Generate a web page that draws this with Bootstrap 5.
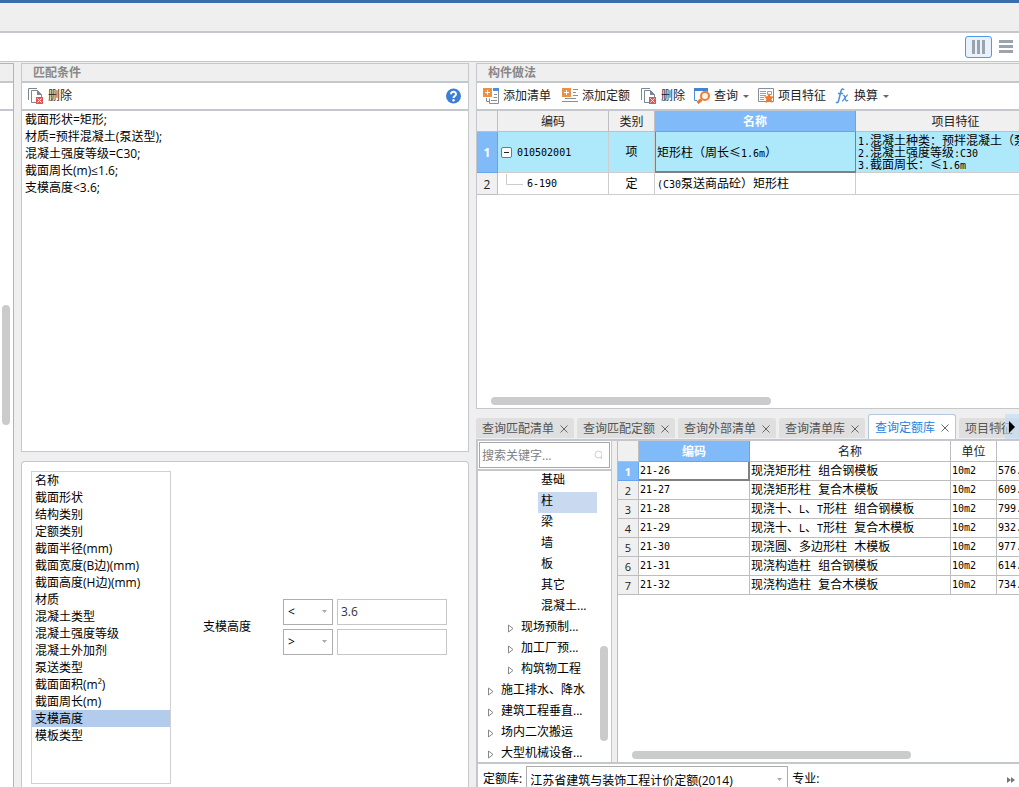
<!DOCTYPE html>
<html lang="zh-CN">
<head>
<meta charset="utf-8">
<meta name="viewport" content="width=device-width, initial-scale=1">
<title>构件做法</title>
<link href="https://cdn.jsdelivr.net/npm/bootstrap@5.3.0/dist/css/bootstrap.min.css" rel="stylesheet">
<script src="https://cdn.jsdelivr.net/npm/bootstrap@5.3.0/dist/js/bootstrap.bundle.min.js"></script>
<style>
:root { --line: #c4c8cc; --chrome: #efefef; --ui: "Open Sans", "Noto Sans CJK SC", sans-serif; --cell: "DejaVu Sans Mono", "Noto Sans CJK SC", monospace; }
body { font-family: var(--ui); font-size: 12px; line-height: 17px; color: #000; background: var(--chrome); }
button, input, select, textarea { font-family: inherit; font-size: 12px; }
.title-strip { height: 33px; background: var(--chrome); border-top: 3px solid #3a6eaa; border-bottom: 2px solid var(--line); }
.view-bar { height: 29px; background: #fff; border-bottom: 1px solid var(--line); }
.view-btn { width: 27px; height: 22px; padding: 0; border: 1px solid transparent; border-radius: 3px; background: none; line-height: 0; }
.view-btn.active { border-color: #4a9be8; background: #e9f2fc; }
.workspace { min-height: 0; padding-top: 1px; display: grid; grid-template-columns: 14px minmax(0, 448fr) minmax(0, 543fr); gap: 7px; }
.split-a, .split-b { display: grid; min-width: 0; min-height: 0; }
.split-a { grid-template-rows: minmax(0, 389fr) minmax(0, 326fr); gap: 9px; }
.split-b { grid-template-rows: minmax(0, 346fr) minmax(0, 373fr); gap: 5px; }
.pane { background: #fff; border: 1px solid var(--line); overflow: hidden; min-height: 0; position: relative; }
.pane-head { height: 19px; padding-left: 11px; background: var(--chrome); border-bottom: 2px solid var(--line); color: #888; font-weight: 600; line-height: 18px; font-size: 12px; margin: 0; flex: none; }
.tools { height: 28px; padding: 0 2px; gap: 3px; border-bottom: 2px solid var(--line); flex: none; }
.tool { display: flex; align-items: center; gap: 4px; height: 22px; padding: 0 4px; border: 0; border-radius: 3px; background: #fff; color: #222; white-space: nowrap; line-height: 22px; }
.tool.has-menu { padding: 0 2px; }
.tool.has-menu::after { content: ""; margin-left: 1px; border: 3px solid transparent; border-top-color: #666; border-bottom: 0; }
.strip { border-width: 1px 1px 0 0; border-color: #b4b4b4; }
.thumb { position: absolute; background: #cbcbcb; border-radius: 4px; }
.thumb-h { height: 8px; }
.thumb-v { width: 8px; }
.rules { resize: none; border: 0; outline: 0; padding: 0 3px; line-height: 17px; color: #000; }
.attrs { width: 140px; margin: 9px 0 3px 9px; border: 1px solid #d0d0d0; border-radius: 0; flex: none; }
.attrs .list-group-item { border: 0; border-radius: 0; padding: 0 3px; line-height: 17px; color: #000; background: none; }
.attrs .list-group-item.active { background: #b3ccec; margin: 0; }
.field, .pick { height: 26px; border: 1px solid #c4c6c9; border-radius: 0; padding: 0 3px; color: #333; background: #fff; }
.pick { appearance: none; border-color: #adadad; color: #000; background: #fff url("data:image/svg+xml,%3Csvg xmlns='http://www.w3.org/2000/svg' width='5' height='3'%3E%3Cpath d='M0 0h5L2.5 3z' fill='%23aaa'/%3E%3C/svg%3E") no-repeat right 5px center; }
.cond { padding: 4px 0 0 11px; }
.cond label { width: 80px; }
.cond .pick { width: 50px; padding-left: 4px; }
.cond .field { width: 110px; }
.sheet { table-layout: fixed; border-collapse: separate; border-spacing: 0; }
.sheet th, .sheet td { border: 0 solid #cdcdcd; border-width: 0 1px 1px 0; padding: 0; overflow: hidden; white-space: nowrap; font-weight: 400; }
.sheet thead th, .sheet tbody th { background: #f0f0f0; text-align: center; color: #222; border-color: #bfbfbf; }
.sheet thead th { height: 21px; line-height: 18px; padding-top: 2px; }
.sheet thead .on, .sheet tbody .on { background: #80baf9; color: #fff; font-weight: 700; border-color: #64a5ee; }
.sheet td { font-family: var(--cell); padding-left: 2px; line-height: 12px; }
.sheet td.kind { padding: 0; text-align: center; }
.sheet .code { font-size: 10px; }
.sheet span.code { line-height: 0; }
.sheet .wide { font-family: "Noto Sans CJK SC", sans-serif; line-height: 0; display: inline-block; width: 12px; text-align: center; }
.sheet .picked { background: #aee9fb; }
.sheet .cursor { box-shadow: inset 0 -1px #808080, inset -1px 0 #808080; border-color: #808080; }
.lg1 .r1 { height: 41px; }
.lg1 .r2 { height: 22px; }
.lg1 td { padding-top: 1px; }
.lg1 tbody th { padding-top: 1px; }
.lg1 .cursor { box-shadow: inset 0 -1px #808080, inset 1px 0 #808080; }
.lg2 tbody tr { height: 19px; }
.lg2 td, .lg2 thead th, .lg2 tbody th { border-color: #bdbdbd; }
.lg2 thead .plain { background: #fff; }
.lg2 tbody th { line-height: 16px; font-size: 11px; padding-top: 2px; }
.lg2 td { padding-left: 1px; }
.tree-code { display: flex; align-items: center; height: 100%; }
.toggle-box { width: 11px; height: 11px; border: 1px solid #777; border-radius: 2px; background: #fff; line-height: 0; padding: 0; margin: 0 5px 0 1px; }
.tabs { height: 25px; gap: 3px; overflow: hidden; flex: none; position: relative; align-items: flex-end; }
.tab-btn { display: flex; align-items: center; gap: 6px; height: 20px; margin-bottom: 1px; padding: 1px 6px 0; border: 0; border-radius: 3px 3px 0 0; background: #dfdfdf; color: #555; white-space: nowrap; flex: none; line-height: 20px; }
.tab-btn.active { height: 25px; margin: 0; border: 1px solid #b5c7dc; border-bottom: 0; background: #fff; color: #2b80df; }
.tab-nav { position: absolute; right: 0; top: 0; height: 25px; }
.tab-nav button { border: 0; padding: 0; width: 14px; height: 25px; background: none; line-height: 0; }
.tab-nav .next { background: rgba(190, 220, 245, .6); }
.query { border-width: 2px 0 0 2px; }
.query-grid { display: grid; grid-template-columns: 134px minmax(0, 1fr); gap: 5px; background: var(--chrome); border-bottom: 2px solid var(--line); }
.query-side, .query-main { background: #fff; position: relative; overflow: hidden; min-height: 0; }
.query-side { border-right: 1px solid var(--line); }
.query-main { border-left: 1px solid #bdbdbd; }
.search { margin: 1px; height: 26px; border: 1px solid #a5a8ac; padding: 0 7px 0 2px; flex: none; }
.search input { border: 0; outline: 0; padding: 0; min-width: 0; color: #333; }
.search input::placeholder { color: #808080; opacity: 1; }
.catalog { border-top: 2px solid var(--line); margin: 0; padding: 0; list-style: none; }
.catalog li { height: 21px; display: flex; align-items: center; gap: 7px; }
.catalog a { color: #000; text-decoration: none; white-space: nowrap; height: 21px; line-height: 18px; }
.catalog .lv1 { padding-left: 10px; }
.catalog .lv2 { padding-left: 30px; }
.catalog .lv3 { padding-left: 60px; }
.catalog .lv3 a { padding: 0 3px; }
.catalog .lv3 .active { background: #c9d9ef; width: 59px; }
.catalog-clip { min-height: 0; overflow: hidden; }
.source { height: 23px; gap: 4px; padding: 2px 4px 0 5px; overflow: hidden; align-items: flex-start; line-height: 26px; flex: none; }
.source .pick { width: 262px; padding-top: 1px; }
</style>
</head>
<body class="d-flex flex-column vh-100 overflow-hidden">
<header class="flex-shrink-0">
  <div class="title-strip"></div>
  <div class="view-bar d-flex align-items-center justify-content-end">
    <button class="view-btn active" type="button" aria-label="分栏显示"><svg width="15" height="14"><path d="M1 0h3v14H1zM6 0h3v14H6zM11 0h3v14h-3z" fill="#9aa3ae"/></svg></button>
    <button class="view-btn" type="button" aria-label="列表显示"><svg width="14" height="14"><path d="M0 0h14v3H0zM0 5h14v3H0zM0 10h14v3H0z" fill="#9aa3ae"/></svg></button>
  </div>
</header>

<main class="workspace flex-grow-1">
  <div class="pane strip d-flex flex-column">
    <div class="pane-head"></div>
    <div class="tools"></div>
    <span class="thumb thumb-v" style="left:2px;top:33.4%;height:16.5%"></span>
  </div>

  <div class="split-a">
    <section class="pane d-flex flex-column">
      <h2 class="pane-head">匹配条件</h2>
      <div class="tools d-flex align-items-center justify-content-between">
        <button class="tool" type="button"><svg width="16" height="16" fill="none"><path d="M.5 12V.5H9M3.500 2.500h6l4 4V14.500h-10z" stroke="#7b8894"/><path d="M9 2v5h5z" fill="#7b8894"/><path d="M8 9h7v7H8z" fill="#d9595b"/><path d="M9.500 10.500l4 4m0-4l-4 4" stroke="#fff"/></svg>删除</button>
        <button class="tool" type="button" aria-label="帮助"><svg width="16" height="16"><circle cx="7.500" cy="8" r="7.500" fill="#3e7fd6"/><path d="M5 6.300c0-3.500 5.200-3.300 5 0C9.900 8 7.500 8 7.500 10" stroke="#fff" stroke-width="2" fill="none"/><circle cx="7.500" cy="12.300" r="1.200" fill="#fff"/></svg></button>
      </div>
      <textarea class="rules flex-grow-1 w-100" aria-label="匹配条件">截面形状=矩形;
材质=预拌混凝土(泵送型);
混凝土强度等级=C30;
截面周长(m)≤1.6;
支模高度&lt;3.6;</textarea>
    </section>

    <section class="pane border-bottom-0 rounded-top-1 d-flex">
      <div class="attrs list-group">
        <button type="button" class="list-group-item list-group-item-action">名称</button>
        <button type="button" class="list-group-item list-group-item-action">截面形状</button>
        <button type="button" class="list-group-item list-group-item-action">结构类别</button>
        <button type="button" class="list-group-item list-group-item-action">定额类别</button>
        <button type="button" class="list-group-item list-group-item-action">截面半径(mm)</button>
        <button type="button" class="list-group-item list-group-item-action">截面宽度(B边)(mm)</button>
        <button type="button" class="list-group-item list-group-item-action">截面高度(H边)(mm)</button>
        <button type="button" class="list-group-item list-group-item-action">材质</button>
        <button type="button" class="list-group-item list-group-item-action">混凝土类型</button>
        <button type="button" class="list-group-item list-group-item-action">混凝土强度等级</button>
        <button type="button" class="list-group-item list-group-item-action">混凝土外加剂</button>
        <button type="button" class="list-group-item list-group-item-action">泵送类型</button>
        <button type="button" class="list-group-item list-group-item-action">截面面积(m²)</button>
        <button type="button" class="list-group-item list-group-item-action">截面周长(m)</button>
        <button type="button" class="list-group-item list-group-item-action active">支模高度</button>
        <button type="button" class="list-group-item list-group-item-action">模板类型</button>
      </div>
      <div class="cond flex-grow-1 d-flex align-items-center justify-content-center">
        <label for="upper">支模高度</label>
        <div class="d-grid gap-1">
          <div class="d-flex gap-1"><select class="pick" aria-label="上限比较"><option>&lt;</option><option>≤</option></select><input id="upper" class="field" type="text" value="3.6"></div>
          <div class="d-flex gap-1"><select class="pick" aria-label="下限比较"><option>&gt;</option><option>≥</option></select><input class="field" type="text" aria-label="下限"></div>
        </div>
      </div>
    </section>
  </div>

  <div class="split-b">
    <section class="pane border-end-0 d-flex flex-column">
      <h2 class="pane-head">构件做法</h2>
      <div class="tools d-flex align-items-center">
        <button class="tool" type="button"><svg width="16" height="16" fill="none"><path d="M10.500 1.500h5v14h-9v-5" stroke="#84919d"/><path d="M10 0h6v3h-6z" fill="#4d8fdc"/><path d="M3.500 10v3.500H6M8 12.500h6M10.500 9.500H14M11 6.500h3" stroke="#84919d"/><path d="M0 0h9v9H0z" fill="#ec9046"/><path d="M4.500 2v5M2 4.500h5" stroke="#fff"/></svg>添加清单</button>
        <button class="tool" type="button"><svg width="16" height="16" fill="none"><path d="M11 1.500h5M11 4.500h3M11 7.500h5M3 10.500h11M0 13.500h16" stroke="#84919d"/><path d="M0 0h9v9H0z" fill="#ec9046"/><path d="M4.500 2v5M2 4.500h5" stroke="#fff"/></svg>添加定额</button>
        <button class="tool" type="button"><svg width="16" height="16" fill="none"><path d="M.5 12V.5H9M3.500 2.500h6l4 4V14.500h-10z" stroke="#7b8894"/><path d="M9 2v5h5z" fill="#7b8894"/><path d="M8 9h7v7H8z" fill="#d9595b"/><path d="M9.500 10.500l4 4m0-4l-4 4" stroke="#fff"/></svg>删除</button>
        <button class="tool has-menu" type="button"><svg width="16" height="16" fill="none"><path d="M.5 3v9.500H3M13.500 3v1" stroke="#4d8fdc"/><path d="M0 0h14v3H0z" fill="#4384d6"/><path d="M7.500 11.500L3.500 15" stroke="#ed7428" stroke-width="3"/><circle cx="11" cy="8" r="4" fill="#fff4ea" stroke="#ed7d35" stroke-width="2"/></svg>查询</button>
        <button class="tool" type="button"><svg width="16" height="16" fill="none"><path d="M.5.5h15v13H.5z" stroke="#84919d"/><path d="M2 3.500h6M2 5.500h6M2 7.500h6M2 9.500h4M2 11.500h4M9.500 3.500h4v3h-4z" stroke="#95a0aa"/><path d="M11 5l1.500 3.200 3.500.3-2.500 2.500.9 4-3.400-1.800L7.500 15l.9-4L6 8.500l3.500-.3z" fill="#f07828"/></svg>项目特征</button>
        <button class="tool has-menu" type="button"><svg width="15" height="16" fill="none" stroke="#4d8fdc"><path d="M9 2C8 0 6.500 1 6 3L3.500 13c-.5 2-1.500 2-2.500 1.200M3 5.500h5" stroke-width="1.500"/><path d="M8 7.500c2-1.500 2 5.500 3.500 5.500.7 0 1-.4 1.500-1M13 7c-1.500-.5-4 6-6 6" stroke-width="1.300"/></svg>换算</button>
      </div>
      <table class="sheet lg1" style="width:579px">
        <colgroup><col style="width:21px"><col style="width:111px"><col style="width:46px"><col style="width:201px"><col style="width:200px"></colgroup>
        <thead><tr><th></th><th>编码</th><th>类别</th><th class="on">名称</th><th>项目特征</th></tr></thead>
        <tbody>
          <tr class="r1"><th class="on">1</th><td class="picked code"><div class="tree-code"><button class="toggle-box" type="button" aria-label="折叠"><svg width="7" height="9"><path d="M1 4.500h5" stroke="#222"/></svg></button>010502001</div></td><td class="picked kind">项</td><td class="picked cursor">矩形柱（周长<span class="wide">≤</span><span class="code">1.6m</span>）</td><td class="picked"><span class="code">1.</span>混凝土种类：预拌混凝土（泵送型）<br><span class="code">2.</span>混凝土强度等级<span class="code">:C30</span><br><span class="code">3.</span>截面周长：<span class="wide">≤</span><span class="code">1.6m</span></td></tr>
          <tr class="r2"><th>2</th><td class="code"><div class="tree-code"><svg width="27" height="20"><path d="M6.500 0v10.500H23" stroke="#ccc" fill="none"/></svg>6-190</div></td><td class="kind">定</td><td><span class="code">(C30</span>泵送商品砼）矩形柱</td><td></td></tr>
        </tbody>
      </table>
      <span class="thumb thumb-h" style="left:14px;bottom:3px;width:51.6%"></span>
    </section>

    <section class="d-flex flex-column overflow-hidden">
      <nav class="tabs d-flex" aria-label="查询">
        <button class="tab-btn" type="button">查询匹配清单<svg width="8" height="8"><path d="M.5.5l7 7m0-7l-7 7" stroke="#666"/></svg></button>
        <button class="tab-btn" type="button">查询匹配定额<svg width="8" height="8"><path d="M.5.5l7 7m0-7l-7 7" stroke="#666"/></svg></button>
        <button class="tab-btn" type="button">查询外部清单<svg width="8" height="8"><path d="M.5.5l7 7m0-7l-7 7" stroke="#666"/></svg></button>
        <button class="tab-btn" type="button">查询清单库<svg width="8" height="8"><path d="M.5.5l7 7m0-7l-7 7" stroke="#666"/></svg></button>
        <button class="tab-btn active" type="button">查询定额库<svg width="8" height="8"><path d="M.5.5l7 7m0-7l-7 7" stroke="#666"/></svg></button>
        <button class="tab-btn" type="button">项目特征<svg width="8" height="8"><path d="M.5.5l7 7m0-7l-7 7" stroke="#666"/></svg></button>
        <div class="tab-nav d-flex"><button type="button" aria-label="向左"><svg width="12" height="12"><path d="M9 0v12L3 6z" fill="#999" fill-opacity=".8"/></svg></button><button class="next" type="button" aria-label="向右"><svg width="8" height="12"><path d="M1 0v12l6-6z"/></svg></button></div>
      </nav>
      <div class="pane query flex-grow-1 d-flex flex-column">
        <div class="query-grid flex-grow-1 overflow-hidden">
          <div class="query-side d-flex flex-column">
            <div class="search d-flex align-items-center"><input class="flex-grow-1" type="text" placeholder="搜索关键字..." aria-label="搜索关键字"><svg width="11" height="11" fill="none" stroke="#cfcfcf"><circle cx="4.500" cy="4.500" r="3.500"/><path d="M7 7l3.500 3.500" stroke-width="2"/></svg></div>
            <div class="catalog-clip flex-grow-1">
            <ul class="catalog">
              <li class="lv3"><a href="#">基础</a></li>
              <li class="lv3"><a class="active" href="#">柱</a></li>
              <li class="lv3"><a href="#">梁</a></li>
              <li class="lv3"><a href="#">墙</a></li>
              <li class="lv3"><a href="#">板</a></li>
              <li class="lv3"><a href="#">其它</a></li>
              <li class="lv3"><a href="#">混凝土...</a></li>
              <li class="lv2"><svg width="6" height="9"><path d="M.5 1v7L5 4.500z" fill="none" stroke="#888"/></svg><a href="#">现场预制...</a></li>
              <li class="lv2"><svg width="6" height="9"><path d="M.5 1v7L5 4.500z" fill="none" stroke="#888"/></svg><a href="#">加工厂预...</a></li>
              <li class="lv2"><svg width="6" height="9"><path d="M.5 1v7L5 4.500z" fill="none" stroke="#888"/></svg><a href="#">构筑物工程</a></li>
              <li class="lv1"><svg width="6" height="9"><path d="M.5 1v7L5 4.500z" fill="none" stroke="#888"/></svg><a href="#">施工排水、降水</a></li>
              <li class="lv1"><svg width="6" height="9"><path d="M.5 1v7L5 4.500z" fill="none" stroke="#888"/></svg><a href="#">建筑工程垂直...</a></li>
              <li class="lv1"><svg width="6" height="9"><path d="M.5 1v7L5 4.500z" fill="none" stroke="#888"/></svg><a href="#">场内二次搬运</a></li>
              <li class="lv1"><svg width="6" height="9"><path d="M.5 1v7L5 4.500z" fill="none" stroke="#888"/></svg><a href="#">大型机械设备...</a></li>
            </ul>
            </div>
            <span class="thumb thumb-v" style="right:3px;top:64%;height:29.4%"></span>
          </div>
          <div class="query-main">
            <table class="sheet lg2" style="width:439px">
              <colgroup><col style="width:21px"><col style="width:111px"><col style="width:201px"><col style="width:46px"><col style="width:60px"></colgroup>
              <thead><tr><th></th><th class="on">编码</th><th class="plain">名称</th><th class="plain">单位</th><th class="plain"></th></tr></thead>
              <tbody>
                <tr><th class="on">1</th><td class="code cursor">21-26</td><td>现浇矩形柱 组合钢模板</td><td class="code">10m2</td><td class="code">576.</td></tr>
                <tr><th>2</th><td class="code">21-27</td><td>现浇矩形柱 复合木模板</td><td class="code">10m2</td><td class="code">609.</td></tr>
                <tr><th>3</th><td class="code">21-28</td><td>现浇十、<span class="code">L</span>、<span class="code">T</span>形柱 组合钢模板</td><td class="code">10m2</td><td class="code">799.</td></tr>
                <tr><th>4</th><td class="code">21-29</td><td>现浇十、<span class="code">L</span>、<span class="code">T</span>形柱 复合木模板</td><td class="code">10m2</td><td class="code">932.</td></tr>
                <tr><th>5</th><td class="code">21-30</td><td>现浇圆、多边形柱 木模板</td><td class="code">10m2</td><td class="code">977.</td></tr>
                <tr><th>6</th><td class="code">21-31</td><td>现浇构造柱 组合钢模板</td><td class="code">10m2</td><td class="code">614.</td></tr>
                <tr><th>7</th><td class="code">21-32</td><td>现浇构造柱 复合木模板</td><td class="code">10m2</td><td class="code">734.</td></tr>
              </tbody>
            </table>
            <span class="thumb thumb-h" style="left:14px;bottom:3px;width:69.6%"></span>
          </div>
        </div>
        <div class="source d-flex">
          <label for="lib">定额库:</label>
          <select id="lib" class="pick"><option>江苏省建筑与装饰工程计价定额(2014)</option></select>
          <span>专业:</span>
          <button class="border-0 bg-transparent p-0 ms-auto" type="button" aria-label="更多"><svg width="8" height="6"><path d="M0 0v6l4-3zM4 0v6l4-3z" fill="#777"/></svg></button>
        </div>
      </div>
    </section>
  </div>
</main>
</body>
</html>
